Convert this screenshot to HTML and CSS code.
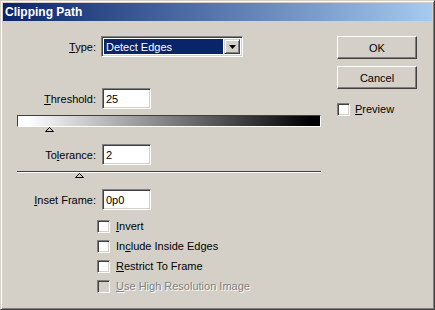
FILE: index.html
```html
<!DOCTYPE html>
<html>
<head>
<meta charset="utf-8">
<link rel="stylesheet" href="styles.css">
</head>
<body>
<div class="window">
  <div class="titlebar"><span class="title">Clipping Path</span></div>
  <div class="content">
    <div class="main">
      <div class="row row-type">
        <span class="label"><u>T</u>ype:</span>
        <div class="select">
          <div class="select-value">Detect Edges</div>
          <div class="select-btn">
            <svg width="7" height="4" viewBox="0 0 7 4"><polygon points="0,0 7,0 3.5,4" fill="#000"/></svg>
          </div>
        </div>
      </div>
      <div class="row row-threshold">
        <span class="label"><u>T</u>hreshold:</span>
        <div class="input">25</div>
      </div>
      <div class="gradbar"></div>
      <div class="thumb-track">
        <svg class="thumb thumb-threshold" width="9" height="5" viewBox="0 0 9 5"><polygon points="0.5,4.5 4.5,0.5 8.5,4.5" fill="#d4d0c8" stroke="#000" stroke-width="1"/></svg>
      </div>
      <div class="row row-tolerance">
        <span class="label">To<u>l</u>erance:</span>
        <div class="input">2</div>
      </div>
      <div class="rule"></div>
      <div class="thumb-track">
        <svg class="thumb thumb-tolerance" width="9" height="5" viewBox="0 0 9 5"><polygon points="0.5,4.5 4.5,0.5 8.5,4.5" fill="#d4d0c8" stroke="#000" stroke-width="1"/></svg>
      </div>
      <div class="row row-inset">
        <span class="label"><u>I</u>nset Frame:</span>
        <div class="input">0p0</div>
      </div>
      <div class="checks">
        <div class="check"><span class="box"></span><span class="check-text"><u>I</u>nvert</span></div>
        <div class="check"><span class="box"></span><span class="check-text">In<u>c</u>lude Inside Edges</span></div>
        <div class="check"><span class="box"></span><span class="check-text"><u>R</u>estrict To Frame</span></div>
        <div class="check disabled"><span class="box"></span><span class="check-text"><u>U</u>se High Resolution Image</span></div>
      </div>
    </div>
    <div class="side">
      <div class="btn btn-ok">OK</div>
      <div class="btn btn-cancel">Cancel</div>
      <div class="check preview"><span class="box"></span><span class="check-text"><u>P</u>review</span></div>
    </div>
  </div>
</div>
</body>
</html>
```

FILE: styles.css
```css
html, body {
  margin: 0;
  padding: 0;
  background: #d4d0c8;
}
body {
  font-family: "Liberation Sans", Arial, sans-serif;
  font-size: 11px;
  color: #000;
}
.window {
  box-sizing: border-box;
  width: 435px;
  height: 310px;
  background: #d4d0c8;
  border: 1px solid;
  border-color: #d4d0c8 #404040 #404040 #d4d0c8;
  box-shadow: inset 1px 1px #fff, inset -1px -1px #808080;
  padding: 2px;
  display: flex;
  flex-direction: column;
  overflow: hidden;
}
.titlebar {
  height: 18px;
  flex: none;
  background: linear-gradient(to right, #0a246a, #a6caf0);
  display: flex;
  align-items: center;
  padding-left: 2px;
}
.title {
  color: #fff;
  font-weight: bold;
  font-size: 12px;
}
.content {
  display: flex;
  padding-top: 15px;
}
.main {
  width: 320px;
  display: flex;
  flex-direction: column;
}
.side {
  width: 80px;
  margin-left: 14px;
  display: flex;
  flex-direction: column;
}
.row {
  display: flex;
  align-items: center;
  height: 21px;
}
.label {
  width: 93px;
  text-align: right;
  flex: none;
}
.select {
  box-sizing: border-box;
  margin-left: 5px;
  width: 142px;
  height: 21px;
  background: #fff;
  border: 1px solid;
  border-color: #808080 #fff #fff #808080;
  box-shadow: inset 1px 1px #404040, inset -1px -1px #d4d0c8;
  padding: 2px;
  display: flex;
}
.select-value {
  flex: 1;
  background: #0a246a;
  color: #fff;
  display: flex;
  align-items: center;
  padding-left: 2px;
  margin-right: 1px;
}
.select-btn {
  box-sizing: border-box;
  width: 16px;
  background: #d4d0c8;
  border: 1px solid;
  border-color: #d4d0c8 #404040 #404040 #d4d0c8;
  box-shadow: inset 1px 1px #fff, inset -1px -1px #808080;
  display: flex;
  align-items: center;
  justify-content: center;
}
.input {
  box-sizing: border-box;
  margin-left: 6px;
  width: 49px;
  height: 21px;
  background: #fff;
  border: 1px solid;
  border-color: #808080 #fff #fff #808080;
  box-shadow: inset 1px 1px #404040, inset -1px -1px #d4d0c8;
  padding-left: 3px;
  display: flex;
  align-items: center;
}
.row-threshold { margin-top: 31px; }
.gradbar {
  box-sizing: border-box;
  margin-top: 6px;
  margin-left: 14px;
  width: 304px;
  height: 12px;
  border: 1px solid;
  border-color: #404040 #fff #fff #404040;
  background: linear-gradient(to right, #fff 3%, #000 97%);
}
.thumb-track {
  height: 5px;
  display: flex;
}
.thumb { display: block; }
.thumb-threshold { margin-left: 42px; }
.thumb-tolerance { margin-left: 72px; }
.row-tolerance { margin-top: 12px; }
.rule {
  margin-top: 6px;
  margin-left: 14px;
  width: 304px;
  height: 0;
  border-top: 1px solid #404040;
  border-bottom: 1px solid #fff;
}
.row-inset { margin-top: 11px; }
.checks {
  margin-top: 10px;
  margin-left: 94px;
  display: flex;
  flex-direction: column;
}
.check {
  display: flex;
  align-items: flex-start;
  height: 20px;
}
.box {
  box-sizing: border-box;
  flex: none;
  width: 13px;
  height: 13px;
  background: #fff;
  border: 1px solid;
  border-color: #808080 #fff #fff #808080;
  box-shadow: inset 1px 1px #404040, inset -1px -1px #d4d0c8;
}
.check-text {
  margin-left: 6px;
  line-height: 13px;
}
.check.disabled .box { background: #d4d0c8; }
.check.disabled .check-text {
  color: #808080;
  text-shadow: 1px 1px #fff;
}
.btn {
  box-sizing: border-box;
  width: 80px;
  height: 23px;
  border: 1px solid;
  border-color: #fff #404040 #404040 #fff;
  box-shadow: inset -1px -1px #808080, inset 1px 1px #d4d0c8;
  display: flex;
  align-items: center;
  justify-content: center;
}
.btn-cancel { margin-top: 7px; }
.preview { margin-top: 14px; }
.preview .check-text { margin-left: 5px; }
```
